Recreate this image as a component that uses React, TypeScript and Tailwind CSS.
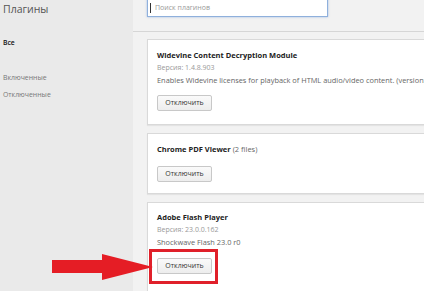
import { ReactNode } from "react";

const font = { fontFamily: '"Open Sans", "Noto Sans", sans-serif' };

function DisableButton() {
  return (
    <button className="flex h-[16px] w-[55px] items-center justify-center rounded-[2px] border border-[#c8c8c8] bg-gradient-to-b from-[#fafafa] to-[#ededed] text-[7px] text-[#333]">
      Отключить
    </button>
  );
}

function Card({ className, children }: { className?: string; children: ReactNode }) {
  return (
    <div
      className={
        "relative w-[300px] border border-[#d9d9d9] bg-white pl-[9px] shadow-[0_1px_1px_rgba(0,0,0,0.06)] " +
        (className ?? "")
      }
    >
      {children}
    </div>
  );
}

export default function App() {
  return (
    <div className="relative flex h-[291px] w-[424px] overflow-hidden bg-[#f2f2f2]" style={font}>
      <aside className="w-[133px] shrink-0 bg-[#eaeaea] pl-[3px]">
        <h1 className="mt-[2px] text-[10.5px] leading-[15px] text-[#555]">Плагины</h1>
        <div className="mt-[20px] text-[6.8px] font-semibold leading-[12px] text-[#111]">Все</div>
        <div className="mt-[23px] text-[6.9px] leading-[12px] text-[#777]">Включенные</div>
        <div className="mt-[5px] text-[6.9px] leading-[12px] text-[#777]">Отключенные</div>
      </aside>

      <main className="flex-1 pl-[14px]">
        <div className="-mt-[9px] flex h-[26px] w-[181px] items-end border border-[#8fb0dc] bg-white pb-[3px] pl-[2px] shadow-[0_0_2px_rgba(80,130,210,0.5)]">
          <span className="mr-[4px] h-[10px] w-px bg-[#333]" />
          <span className="text-[7px] leading-[10px] text-[#999]">Поиск плагинов</span>
        </div>
        <div className="mt-[14px] -ml-[14px] border-b border-[#d6d6d6]" />

        <div className="mt-[7px] flex flex-col gap-[8px]">
          <Card className="h-[86px] pt-[9px]">
            <div className="whitespace-nowrap text-[7.5px] font-bold leading-[13px] text-[#222]">
              Widevine Content Decryption Module
            </div>
            <div className="text-[7px] leading-[12px] text-[#999]">Версия: 1.4.8.903</div>
            <div className="whitespace-nowrap text-[7.4px] leading-[13px] text-[#666]">
              Enables Widevine licenses for playback of HTML audio/video content. (version: 1.4.8.903)
            </div>
            <div className="mt-[8px]">
              <DisableButton />
            </div>
          </Card>

          <Card className="h-[61px] pt-[9px]">
            <div className="whitespace-nowrap text-[7.5px] leading-[13px] text-[#666]">
              <span className="font-bold text-[#222]">Chrome PDF Viewer</span> (2 files)
            </div>
            <div className="mt-[10px]">
              <DisableButton />
            </div>
          </Card>

          <Card className="h-[90px] pt-[8px]">
            <div className="whitespace-nowrap text-[7.5px] font-bold leading-[13px] text-[#222]">
              Adobe Flash Player
            </div>
            <div className="text-[7px] leading-[12px] text-[#999]">Версия: 23.0.0.162</div>
            <div className="whitespace-nowrap text-[7.4px] leading-[13px] text-[#666]">Shockwave Flash 23.0 r0</div>
            <div className="relative mt-[9px] w-fit">
              <DisableButton />
              <div className="absolute -left-[8px] -top-[9px] h-[35px] w-[69px] border-[3px] border-[#e0202a]" />
            </div>
          </Card>
        </div>
      </main>

      <svg className="absolute left-[52px] top-[254px]" width="101" height="26" viewBox="0 0 101 26">
        <polygon points="0,6 50,6 50,0 101,13 50,26 50,19 0,19" fill="#e51d25" />
      </svg>
    </div>
  );
}
